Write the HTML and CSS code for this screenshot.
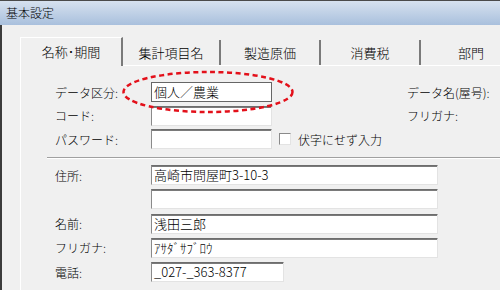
FILE: index.html
```html
<!DOCTYPE html>
<html lang="ja">
<head>
    <meta charset="UTF-8">
    <title>基本設定</title>
    <link rel="stylesheet" href="styles.css">
</head>
<body>
<div class="window">
    <div class="titlebar">基本設定</div>
    <div class="frame">
        <div class="tabs">
            <div class="tab active">名称･期間</div>
            <div class="tab tab-2">集計項目名</div>
            <div class="tab">製造原価</div>
            <div class="tab">消費税</div>
            <div class="tab tab-last">部門</div>
        </div>
        <div class="panel">
            <div class="grid-top">
                <span class="label">データ区分:</span>
                <div class="field focus">個人／農業</div>
                <span></span>
                <span class="label">データ名(屋号):</span>

                <span class="label">コード:</span>
                <div class="field"></div>
                <span></span>
                <span class="label">フリガナ:</span>

                <span class="label">パスワード:</span>
                <div class="field"></div>
                <div class="check"><span class="box"></span>伏字にせず入力</div>
                <span></span>
            </div>
            <div class="sep"></div>
            <div class="grid-bottom">
                <span class="label">住所:</span>
                <div class="field">高崎市問屋町3-10-3</div>

                <span></span>
                <div class="field"></div>

                <span class="label">名前:</span>
                <div class="field">浅田三郎</div>

                <span class="label">フリガナ:</span>
                <div class="field">ｱｻﾀﾞｻﾌﾞﾛｳ</div>

                <span class="label">電話:</span>
                <div class="field short">_027-_363-8377</div>
            </div>
        </div>
    </div>
    <svg class="mark" width="174" height="46" viewBox="0 0 174 46">
        <ellipse cx="87" cy="22" rx="84.5" ry="20" fill="none" stroke="#e3101a" stroke-width="2.5" stroke-dasharray="5 3.5"/>
    </svg>
</div>
</body>
</html>
```

FILE: styles.css
```css
* {
    box-sizing: border-box;
}
body {
    margin: 0;
    font-family: "Noto Sans CJK JP", "Noto Sans", sans-serif;
    font-size: 12px;
    font-weight: 300;
    color: #000;
}
.window {
    position: relative;
    width: 500px;
    height: 290px;
    overflow: hidden;
    background: #f0f0f0;
}
.titlebar {
    height: 25px;
    line-height: 24px;
    padding-left: 6px;
    border-top: 1px solid #4a4a4a;
    background: linear-gradient(#d6e1ef, #a9c0dd);
}
.frame {
    height: 265px;
    border-left: 2px solid #3c3c3c;
    padding: 12px 0 0 18px;
}
.tabs {
    display: flex;
    align-items: flex-end;
    height: 29px;
    border-bottom: 1px solid #fff;
    white-space: nowrap;
}
.tab {
    flex: none;
    width: 100px;
    height: 25px;
    line-height: 25px;
    text-align: center;
    font-size: 13px;
    border-right: 2px solid #7a7a7a;
}
.tab-2 {
    width: 98px;
}
.tab-last {
    width: 102px;
}
.tab.active {
    width: 103px;
    height: 29px;
    line-height: 28px;
    margin-bottom: -1px;
    border-top: 1px solid #fff;
    border-left: 1px solid #fff;
    background: #f0f0f0;
}
.panel {
    height: 224px;
    border-left: 1px solid #fff;
    padding: 16px 0 0 34px;
}
.grid-top {
    display: grid;
    grid-template-columns: 96px 121px 135px auto;
    grid-auto-rows: 20px;
    row-gap: 3.5px;
    align-items: center;
    white-space: nowrap;
}
.grid-bottom {
    display: grid;
    grid-template-columns: 96px 287px;
    grid-auto-rows: 20px;
    row-gap: 4.25px;
    align-items: center;
    margin-top: 6px;
}
.field {
    height: 20px;
    background: #fff;
    border: 1px solid;
    border-color: #6d6d6d #e3e3e3 #e3e3e3 #8a8a8a;
    box-shadow: inset 0 1px 0 #7a7a7a;
    padding-left: 2px;
    font-size: 13px;
    line-height: 18px;
    white-space: nowrap;
}
.field.focus {
    border: 1px solid #666;
    box-shadow: none;
}
.field.short {
    width: 133px;
}
.check {
    display: flex;
    align-items: center;
    gap: 7px;
    margin-left: 7px;
}
.box {
    width: 12px;
    height: 12px;
    background: #fff;
    border: 1px solid;
    border-color: #8a8a8a #e3e3e3 #e3e3e3 #8a8a8a;
}
.sep {
    margin: 8px 0 0 -8px;
    height: 2px;
    border-top: 1px solid #a0a0a0;
    border-bottom: 1px solid #fff;
}
.mark {
    position: absolute;
    left: 121px;
    top: 70px;
}
```
